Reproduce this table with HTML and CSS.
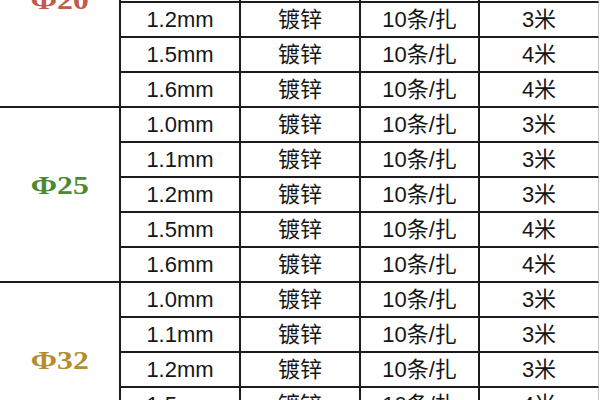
FILE: index.html
```html
<!DOCTYPE html>
<html lang="zh">
<head>
<meta charset="utf-8">
<link rel="stylesheet" href="styles.css">
</head>
<body>
<div class="frame">
<table class="spec">
  <colgroup>
    <col class="c-size"><col class="c-thick"><col class="c-finish"><col class="c-pack"><col class="c-len">
  </colgroup>
  <tbody>
    <tr>
      <td class="dia dia-20" rowspan="5"><span class="phi red">Φ20</span></td>
      <td>1.0mm</td><td>镀锌</td><td>10条/扎</td><td class="last">3米</td>
    </tr>
    <tr><td>1.1mm</td><td>镀锌</td><td>10条/扎</td><td class="last">3米</td></tr>
    <tr><td>1.2mm</td><td>镀锌</td><td>10条/扎</td><td class="last">3米</td></tr>
    <tr><td>1.5mm</td><td>镀锌</td><td>10条/扎</td><td class="last">4米</td></tr>
    <tr><td>1.6mm</td><td>镀锌</td><td>10条/扎</td><td class="last">4米</td></tr>

    <tr>
      <td class="dia" rowspan="5"><span class="phi green">Φ25</span></td>
      <td>1.0mm</td><td>镀锌</td><td>10条/扎</td><td class="last">3米</td>
    </tr>
    <tr><td>1.1mm</td><td>镀锌</td><td>10条/扎</td><td class="last">3米</td></tr>
    <tr><td>1.2mm</td><td>镀锌</td><td>10条/扎</td><td class="last">3米</td></tr>
    <tr><td>1.5mm</td><td>镀锌</td><td>10条/扎</td><td class="last">4米</td></tr>
    <tr><td>1.6mm</td><td>镀锌</td><td>10条/扎</td><td class="last">4米</td></tr>

    <tr>
      <td class="dia" rowspan="5"><span class="phi gold">Φ32</span></td>
      <td>1.0mm</td><td>镀锌</td><td>10条/扎</td><td class="last">3米</td>
    </tr>
    <tr><td>1.1mm</td><td>镀锌</td><td>10条/扎</td><td class="last">3米</td></tr>
    <tr><td>1.2mm</td><td>镀锌</td><td>10条/扎</td><td class="last">3米</td></tr>
    <tr><td>1.5mm</td><td>镀锌</td><td>10条/扎</td><td class="last">4米</td></tr>
    <tr><td>1.6mm</td><td>镀锌</td><td>10条/扎</td><td class="last">4米</td></tr>
  </tbody>
</table>
</div>
</body>
</html>
```

FILE: styles.css
```css
html, body {
  margin: 0;
  padding: 0;
  background: #ffffff;
}

.frame {
  width: 600px;
  height: 400px;
  overflow: hidden;
  background: #ffffff;
}

.spec {
  margin-top: -67px;
  border-collapse: separate;
  border-spacing: 0;
  table-layout: fixed;
  width: 599px;
  font-family: "Liberation Sans", "Noto Sans CJK SC", sans-serif;
  font-size: 22px;
  color: #161616;
}

.c-size { width: 121px; }
.c-thick { width: 120px; }
.c-finish { width: 120px; }
.c-pack { width: 119px; }
.c-len { width: 119px; }

.spec td {
  box-sizing: border-box;
  height: 35px;
  padding: 0;
  text-align: center;
  vertical-align: middle;
  border-right: 2px solid #1c1c1c;
  border-bottom: 2px solid #1c1c1c;
  line-height: 33px;
  white-space: nowrap;
}

.spec td.last {
  border-right: 1px solid #c8c8c8;
}

.spec td.dia {
  padding-bottom: 18px;
  line-height: 1;
}

.spec td.dia-20 {
  padding-bottom: 38px;
}

.phi {
  display: inline-block;
  font-family: "Liberation Serif", "DejaVu Serif", serif;
  font-weight: bold;
  font-size: 26px;
  transform: scaleX(1.22);
}

.red { color: #c25a4c; }
.green { color: #4d8a2f; }
.gold { color: #b38c33; }
```
